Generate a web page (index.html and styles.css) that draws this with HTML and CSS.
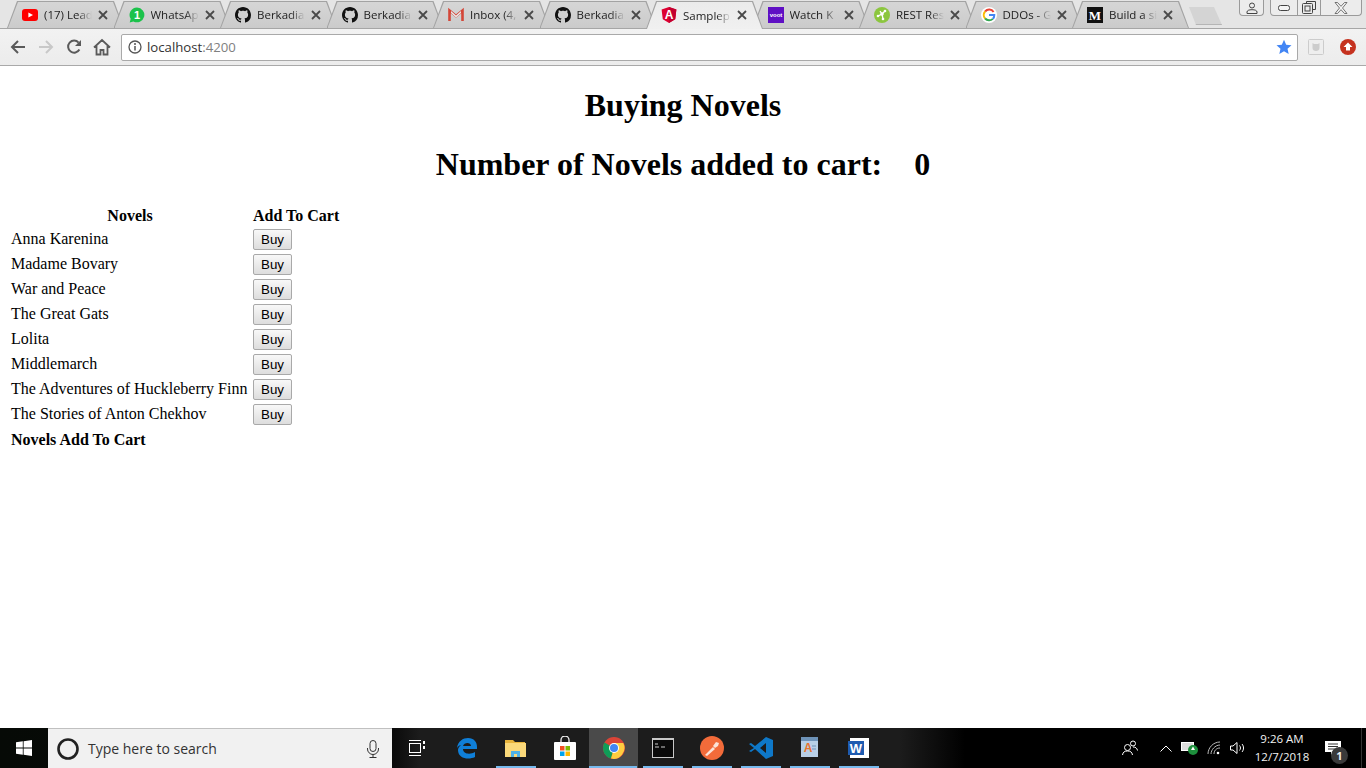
FILE: index.html
```html
<!DOCTYPE html>
<html lang="en">
<head>
    <meta charset="UTF-8">
    <title>Samplep</title>
    <link rel="stylesheet" href="styles.css">
</head>
<body>
    <svg class="sprite" width="0" height="0">
        <symbol id="github" viewBox="0 0 16 16"><path fill="#111" d="M8 0C3.58 0 0 3.58 0 8c0 3.54 2.29 6.53 5.47 7.59.4.07.55-.17.55-.38 0-.19-.01-.82-.01-1.49-2.01.37-2.53-.49-2.69-.94-.09-.23-.48-.94-.82-1.13-.28-.15-.68-.52-.01-.53.63-.01 1.08.58 1.23.82.72 1.21 1.87.87 2.33.66.07-.52.28-.87.51-1.07-1.78-.2-3.64-.89-3.64-3.95 0-.87.31-1.59.82-2.15-.08-.2-.36-1.02.08-2.12 0 0 .67-.21 2.2.82.64-.18 1.32-.27 2-.27.68 0 1.36.09 2 .27 1.53-1.04 2.2-.82 2.2-.82.44 1.1.16 1.92.08 2.12.51.56.82 1.27.82 2.15 0 3.07-1.87 3.75-3.65 3.95.29.25.54.73.54 1.48 0 1.07-.01 1.93-.01 2.2 0 .21.15.46.55.38A8.013 8.013 0 0016 8c0-4.42-3.58-8-8-8z"/></symbol>
        <symbol id="close" viewBox="0 0 10 10"><path d="M1 1l8 8M9 1l-8 8" stroke="#4a4a4a" stroke-width="1.8" fill="none"/></symbol>
    </svg>

    <div class="tabstrip">
        <div class="tab">
            <svg class="favicon" viewBox="0 0 16 16"><rect y="2" width="16" height="12" rx="3" fill="#f00"/><path d="M6.4 5.4v5.2L11 8z" fill="#fff"/></svg>
            <span class="tab-title">(17) Lead</span>
            <svg class="tab-close"><use href="#close"/></svg>
        </div>
        <div class="tab">
            <svg class="favicon" viewBox="0 0 16 16"><path d="M8 .5a7.4 7.4 0 0 0-6.3 11.3L.7 15.4l3.7-1A7.4 7.4 0 1 0 8 .5z" fill="#1bc24b"/><text x="8" y="12" class="fav-num">1</text></svg>
            <span class="tab-title">WhatsAp</span>
            <svg class="tab-close"><use href="#close"/></svg>
        </div>
        <div class="tab">
            <svg class="favicon"><use href="#github"/></svg>
            <span class="tab-title">Berkadia</span>
            <svg class="tab-close"><use href="#close"/></svg>
        </div>
        <div class="tab">
            <svg class="favicon"><use href="#github"/></svg>
            <span class="tab-title">Berkadia</span>
            <svg class="tab-close"><use href="#close"/></svg>
        </div>
        <div class="tab">
            <svg class="favicon" viewBox="0 0 16 16"><path d="M1.5 14V3.5L8 9l6.500-5.500V14" fill="none" stroke="#d44638" stroke-width="2.600"/><path d="M3 4l5 4.500L13 4v2L8 10.500 3 6z" fill="#e8e8e8"/></svg>
            <span class="tab-title">Inbox (4,</span>
            <svg class="tab-close"><use href="#close"/></svg>
        </div>
        <div class="tab">
            <svg class="favicon"><use href="#github"/></svg>
            <span class="tab-title">Berkadia</span>
            <svg class="tab-close"><use href="#close"/></svg>
        </div>
        <div class="tab tab-active">
            <svg class="favicon" viewBox="0 0 16 16"><path d="M8 0L.6 2.600l1.200 9.700L8 16l6.200-3.700 1.200-9.700z" fill="#dd0031"/><path d="M8 0v16l6.200-3.700 1.200-9.700z" fill="#c3002f"/><text x="8" y="12.300" class="fav-a">A</text></svg>
            <span class="tab-title">Samplep</span>
            <svg class="tab-close"><use href="#close"/></svg>
        </div>
        <div class="tab">
            <svg class="favicon" viewBox="0 0 16 16"><rect width="16" height="16" fill="#5f0fc4"/><text x="8" y="10" class="fav-voot">voot</text></svg>
            <span class="tab-title">Watch K</span>
            <svg class="tab-close"><use href="#close"/></svg>
        </div>
        <div class="tab">
            <svg class="favicon" viewBox="0 0 16 16"><circle cx="8" cy="8" r="8" fill="#8cc63f"/><path d="M4 9l4-2 3-3M8 7l1 5M8 7l-2-3" stroke="#fff" stroke-width="1.300" fill="none"/><circle cx="8" cy="7" r="1.800" fill="#fff"/><circle cx="4" cy="9" r="1.300" fill="#fff"/><circle cx="11" cy="4" r="1.300" fill="#fff"/><circle cx="9" cy="12" r="1.300" fill="#fff"/></svg>
            <span class="tab-title">REST Res</span>
            <svg class="tab-close"><use href="#close"/></svg>
        </div>
        <div class="tab">
            <svg class="favicon" viewBox="0 0 16 16"><circle cx="8" cy="8" r="8" fill="#fff"/><path d="M12.600 5A5.300 5.300 0 0 0 4.100 4.500" fill="none" stroke="#ea4335" stroke-width="2"/><path d="M4.100 4.500a5.300 5.300 0 0 0 0 7" fill="none" stroke="#fbbc05" stroke-width="2"/><path d="M4.100 11.500a5.300 5.300 0 0 0 7.700.400" fill="none" stroke="#34a853" stroke-width="2"/><path d="M11.800 11.900A5.300 5.300 0 0 0 13.300 8H8" fill="none" stroke="#4285f4" stroke-width="2"/></svg>
            <span class="tab-title">DDOs - G</span>
            <svg class="tab-close"><use href="#close"/></svg>
        </div>
        <div class="tab">
            <svg class="favicon" viewBox="0 0 16 16"><rect width="16" height="16" fill="#111"/><text x="8" y="12.500" class="fav-m">M</text></svg>
            <span class="tab-title">Build a si</span>
            <svg class="tab-close"><use href="#close"/></svg>
        </div>
        <div class="new-tab"></div>
        <div class="profile-btn">
            <svg width="12" height="12" viewBox="0 0 12 12"><circle cx="6" cy="3.500" r="2.500" fill="none" stroke="#444"/><path d="M1 11.500V10c0-1.500 2-2.300 5-2.300s5 .8 5 2.300v1.500z" fill="none" stroke="#444"/></svg>
        </div>
        <div class="window-btns">
            <div class="win-btn win-min"><svg width="12" height="6" viewBox="0 0 12 6"><rect x=".5" y=".5" width="11" height="5" rx="2" fill="#f4f4f4" stroke="#444"/></svg></div>
            <div class="win-btn win-restore"><svg width="14" height="13" viewBox="0 0 14 13"><path d="M4.500 2.500V.5h9v8h-3" fill="none" stroke="#444"/><rect x=".5" y="2.500" width="10" height="10" rx="1" fill="none" stroke="#444"/><rect x="3" y="5" width="5" height="5" fill="none" stroke="#444"/></svg></div>
            <div class="win-btn win-close"><svg width="14" height="12" viewBox="0 0 14 12"><path d="M1 .5h2.500L7 4.300 10.500.5H13L8.500 6 13 11.500h-2.500L7 7.700l-3.500 3.800H1L5.500 6z" fill="#f4f4f4" stroke="#555" stroke-width=".8"/></svg></div>
        </div>
    </div>

    <div class="toolbar">
        <div class="tool-btn"><svg width="16" height="16" viewBox="0 0 16 16"><path d="M15 8H2.500M8 2L2 8l6 6" fill="none" stroke="#5a5a5a" stroke-width="2"/></svg></div>
        <div class="tool-btn"><svg width="16" height="16" viewBox="0 0 16 16"><path d="M1 8h12.500M8 2l6 6-6 6" fill="none" stroke="#c8c8c8" stroke-width="2"/></svg></div>
        <div class="tool-btn"><svg width="16" height="16" viewBox="0 0 16 16"><path d="M13.400 10.500A6 6 0 1 1 12.600 3.600" fill="none" stroke="#5a5a5a" stroke-width="2"/><path d="M15 1v6H9z" fill="#5a5a5a"/></svg></div>
        <div class="tool-btn"><svg width="18" height="18" viewBox="0 0 18 18"><path d="M1 9.500L9 2l8 7.500M3.500 8v8.500h4V12h3v4.500h4V8" fill="none" stroke="#5a5a5a" stroke-width="1.800"/></svg></div>
        <div class="omnibox">
            <svg class="omni-info" width="14" height="14" viewBox="0 0 14 14"><circle cx="7" cy="7" r="6" fill="none" stroke="#555" stroke-width="1.300"/><path d="M7 6v4.500" stroke="#555" stroke-width="1.500"/><circle cx="7" cy="4" r="1" fill="#555"/></svg>
            <span class="omni-host">localhost</span><span class="omni-port">:4200</span>
            <svg class="omni-star" width="16" height="16" viewBox="0 0 16 16"><path d="M8 .8l2.200 4.900 5.300.5-4 3.600 1.200 5.300L8 12.300 3.300 15.100l1.200-5.300-4-3.600 5.300-.5z" fill="#4285f4"/></svg>
        </div>
        <div class="tool-btn ext-btn"><svg width="16" height="16" viewBox="0 0 16 16"><rect x=".5" y=".5" width="15" height="15" rx="1" fill="#eee" stroke="#ccc"/><path d="M4.500 4l1.500 1h4l1.500-1v5c0 2-1.500 3-3.500 3s-3.500-1-3.500-3z" fill="#ccc"/></svg></div>
        <div class="tool-btn"><svg width="16" height="16" viewBox="0 0 16 16"><circle cx="8" cy="8" r="8" fill="#c5321f"/><path d="M8 3.500L12.500 8H10v3.500H6V8H3.500z" fill="#fff"/></svg></div>
    </div>

    <div class="page">
        <h1>Buying Novels</h1>
        <h1>Number of Novels added to cart: &nbsp;&nbsp; 0</h1>
        <table>
            <tr>
                <th class="novel-col">Novels</th>
                <th>Add To Cart</th>
            </tr>
            <tr><td>Anna Karenina</td><td><button class="buy-btn">Buy</button></td></tr>
            <tr><td>Madame Bovary</td><td><button class="buy-btn">Buy</button></td></tr>
            <tr><td>War and Peace</td><td><button class="buy-btn">Buy</button></td></tr>
            <tr><td>The Great Gats</td><td><button class="buy-btn">Buy</button></td></tr>
            <tr><td>Lolita</td><td><button class="buy-btn">Buy</button></td></tr>
            <tr><td>Middlemarch</td><td><button class="buy-btn">Buy</button></td></tr>
            <tr><td>The Adventures of Huckleberry Finn</td><td><button class="buy-btn">Buy</button></td></tr>
            <tr><td>The Stories of Anton Chekhov</td><td><button class="buy-btn">Buy</button></td></tr>
            <tr><td class="table-foot"><b>Novels Add To Cart</b></td><td></td></tr>
        </table>
    </div>

    <div class="taskbar">
        <div class="start-btn"><svg width="16" height="16" viewBox="0 0 16 16"><path d="M0 2.300l6.800-1v6.200H0zM7.600 1.200L16 0v7.500H7.600zM0 8.400h6.800v6.300L0 13.700zM7.600 8.400H16V16l-8.400-1.200z" fill="#fff"/></svg></div>
        <div class="search-box">
            <svg width="24" height="24" viewBox="0 0 24 24"><circle cx="12" cy="12" r="9.500" fill="none" stroke="#222" stroke-width="2.600"/></svg>
            <span class="search-text">Type here to search</span>
            <svg class="search-mic" width="14" height="18" viewBox="0 0 14 18"><rect x="4" y=".5" width="6" height="11" rx="3" fill="none" stroke="#333"/><path d="M1.500 8v1a5.500 5.500 0 0 0 11 0V8M7 14.500V17M3.500 17.500h7" fill="none" stroke="#333"/></svg>
        </div>
        <div class="task-view"><svg width="16" height="16" viewBox="0 0 16 16"><path d="M0 .5h12M0 15.500h12" stroke="#fff"/><rect x=".5" y="3.500" width="11" height="9" fill="none" stroke="#fff"/><path d="M14 1h2v3h-2zM14 6h2v3h-2z" fill="#fff"/></svg></div>

        <div class="task-item"><svg width="22" height="22" viewBox="0 0 22 22"><path d="M1 11C2 4 7 1 12 1c6 0 9 4 9 9v2H7c0 5 7 6 12 3v5c-6 3-17 2-17-7 0-2 1-3 3-5-1 0-3 1-4 3zm6-2h8c0-4-7-4-8 0z" fill="#0f7fd8"/></svg></div>
        <div class="task-item task-open"><svg width="22" height="20" viewBox="0 0 22 20"><path d="M0 2h8l2 2h10v3H0z" fill="#e8b43c"/><rect y="5" width="21" height="14" fill="#fbd97a"/><path d="M6 19v-6h9v6h-3v-3H9v3z" fill="#4fb3e8"/></svg></div>
        <div class="task-item"><svg width="22" height="24" viewBox="0 0 22 24"><path d="M7 7V4a4 4 0 0 1 8 0v3" fill="none" stroke="#eee" stroke-width="1.300"/><rect y="6" width="22" height="18" rx="1" fill="#fff"/><path d="M6 10h4.500v4.500H6z" fill="#f25022"/><path d="M11.500 10H16v4.500h-4.500z" fill="#7fba00"/><path d="M6 15.500h4.500V20H6z" fill="#00a4ef"/><path d="M11.500 15.500H16V20h-4.500z" fill="#ffb900"/></svg></div>
        <div class="task-item task-open task-active"><svg width="22" height="22" viewBox="0 0 22 22"><circle cx="11" cy="11" r="11" fill="#db4437"/><path d="M11 11L1.500 5.500A11 11 0 0 0 8 21.600z" fill="#0f9d58"/><path d="M11 6h9.300A11 11 0 0 1 8 21.600L11 11z" fill="#ffcd40"/><circle cx="11" cy="11" r="5" fill="#fff"/><circle cx="11" cy="11" r="4" fill="#4285f4"/></svg></div>
        <div class="task-item task-open"><svg width="22" height="20" viewBox="0 0 22 20"><rect width="22" height="20" fill="#c9c9c9"/><rect x="1" y="2" width="20" height="17" fill="#0a0a0a"/><path d="M3 6h3M3 9h4M9 9h4" stroke="#ccc"/></svg></div>
        <div class="task-item task-open"><svg width="24" height="24" viewBox="0 0 24 24"><circle cx="12" cy="12" r="12" fill="#f26b3a"/><path d="M5 19l8-8 2 2-8 7zM13 10l3-4 3 1-1 3-3 2z" fill="#fbe3d8"/></svg></div>
        <div class="task-item task-open"><svg width="24" height="24" viewBox="0 0 24 24"><path d="M17 1l7 3v16l-7 3L6 13l-4 3-2-1 5-3-5-4 2-1 4 3zm0 6l-6 5 6 5z" fill="#0e78c8"/></svg></div>
        <div class="task-item task-open"><svg width="20" height="22" viewBox="0 0 20 22"><rect x="1" width="17" height="20" fill="#b8cfe6"/><rect x="1" width="17" height="4" fill="#6e93b8"/><text x="8" y="15" class="task-a">A</text><path d="M12 9h4M12 12h4" stroke="#6e93b8"/></svg></div>
        <div class="task-item task-open"><svg width="22" height="22" viewBox="0 0 22 22"><rect x="2" y="1" width="19" height="20" fill="#fff"/><rect y="4" width="16" height="14" fill="#1e5bb0"/><text x="8" y="16" class="task-w">W</text></svg></div>

        <div class="tray">
            <div class="tray-item"><svg width="16" height="16" viewBox="0 0 16 16"><circle cx="5.500" cy="7.500" r="3" fill="none" stroke="#fff"/><path d="M.5 15c.5-3 2-4 5-4s4.500 1 5 4" fill="none" stroke="#fff"/><circle cx="11" cy="3.500" r="2.500" fill="none" stroke="#fff"/><path d="M11 7c2.500 0 4 1 4.500 3.500" fill="none" stroke="#fff"/></svg></div>
            <div class="tray-item tray-chevron"><svg width="12" height="7" viewBox="0 0 12 7"><path d="M.5 6.500L6 1l5.500 5.500" fill="none" stroke="#fff"/></svg></div>
            <div class="tray-item"><svg width="18" height="14" viewBox="0 0 18 14"><rect x=".5" y="1.500" width="12" height="8" fill="#ddd" stroke="#fff"/><circle cx="12" cy="9" r="5" fill="#1d8f3c"/><path d="M12 5.500L10 9h4z" fill="#fff"/></svg></div>
            <div class="tray-item"><svg width="14" height="14" viewBox="0 0 14 14"><path d="M1 13C1 7 6 1 13 1M4 13c0-4 4-9 9-9M7 13c0-3 2-6 6-6" fill="none" stroke="#bbb"/><circle cx="11" cy="12" r="1.300" fill="#fff"/></svg></div>
            <div class="tray-item"><svg width="16" height="14" viewBox="0 0 16 14"><path d="M.5 5h2.500L7 1.500v11L3 9H.5z" fill="none" stroke="#fff"/><path d="M9.500 4.500c1.300 1.500 1.300 3.500 0 5M12 3c2 2.300 2 5.700 0 8" fill="none" stroke="#fff"/></svg></div>
            <div class="tray-clock">
                <div>9:26 AM</div>
                <div>12/7/2018</div>
            </div>
            <div class="tray-notify">
                <svg width="16" height="14" viewBox="0 0 16 14"><path d="M0 0h16v11H9l-3 3v-3H0z" fill="#fff"/><path d="M3 3h10M3 5.500h10M3 8h7" stroke="#333"/></svg>
                <span class="notify-badge">1</span>
            </div>
        </div>
    </div>
</body>
</html>
```

FILE: styles.css
```css
html, body {
    margin: 0;
    height: 100%;
    overflow: hidden;
}
body {
    display: flex;
    flex-direction: column;
    height: 768px;
    background: white;
}
.sprite {
    position: absolute;
}

/* tabs */
.tabstrip {
    display: flex;
    align-items: flex-start;
    height: 29px;
    box-sizing: border-box;
    padding: 1px 5px 0 7px;
    background: #e5e5e5;
    border-bottom: 1px solid #a6a6a6;
    font-family: "Open Sans", sans-serif;
}
.tab {
    position: relative;
    display: flex;
    align-items: center;
    flex: none;
    width: 117px;
    height: 27px;
    margin-right: -10.5px;
    padding-left: 15px;
    box-sizing: border-box;
    background: #a3a3a3;
    clip-path: polygon(0 100%, 10px 0, 107px 0, 117px 100%);
}
.tab::before {
    content: "";
    position: absolute;
    z-index: -1;
    inset: 1px 1px 0 1px;
    background: linear-gradient(#d6d6d6, #cbcbcb);
    clip-path: polygon(0 100%, 10px 0, 105px 0, 115px 100%);
}
.tab-active {
    z-index: 2;
    height: 28px;
}
.tab-active::before {
    background: linear-gradient(#ebebeb, #f0f0f0);
}
.favicon {
    flex: none;
    width: 16px;
    height: 16px;
}
.tab-title {
    flex: none;
    width: 48px;
    margin-left: 6px;
    overflow: hidden;
    white-space: nowrap;
    font-size: 11.5px;
    color: #222;
    -webkit-mask-image: linear-gradient(to right, #000 70%, transparent 100%);
    mask-image: linear-gradient(to right, #000 70%, transparent 100%);
}
.tab-close {
    flex: none;
    width: 10px;
    height: 10px;
    margin-left: 6px;
}
.fav-num {
    font: bold 11px "Liberation Sans", sans-serif;
    fill: #fff;
    text-anchor: middle;
}
.fav-a {
    font: bold 12px "Liberation Sans", sans-serif;
    fill: #fff;
    text-anchor: middle;
}
.fav-voot {
    font: bold 6px "Liberation Sans", sans-serif;
    fill: #fff;
    text-anchor: middle;
}
.fav-m {
    font: bold 13px "Liberation Serif", serif;
    fill: #fff;
    text-anchor: middle;
}
.new-tab {
    flex: none;
    width: 33px;
    height: 17px;
    margin: 6px 0 0 10.5px;
    background: #d4d4d4;
    border-bottom: 1px solid #b5b5b5;
    clip-path: polygon(0 0, 25px 0, 33px 100%, 7px 100%);
}
.profile-btn {
    display: flex;
    align-items: center;
    justify-content: center;
    flex: none;
    width: 23px;
    height: 15px;
    margin: -1px 0 0 17px;
    background: #ececec;
    border: 1px solid #9a9a9a;
    border-top: none;
    border-radius: 0 0 4px 4px;
}
.window-btns {
    display: flex;
    flex: none;
    height: 15px;
    margin: -1px 0 0 6px;
    background: #ececec;
    border: 1px solid #9a9a9a;
    border-top: none;
    border-radius: 0 0 4px 4px;
}
.win-btn {
    display: flex;
    align-items: center;
    justify-content: center;
    box-sizing: border-box;
    border-left: 1px solid #9a9a9a;
}
.win-min {
    width: 26px;
    border-left: none;
}
.win-restore {
    width: 23px;
}
.win-close {
    width: 41px;
}

/* toolbar */
.toolbar {
    display: flex;
    align-items: center;
    flex: none;
    height: 37px;
    box-sizing: border-box;
    padding: 0 4px;
    background: linear-gradient(#f2f2f2, #ececec);
    border-bottom: 1px solid #a9a9a9;
}
.tool-btn {
    display: flex;
    align-items: center;
    justify-content: center;
    flex: none;
    width: 28px;
}
.omnibox {
    display: flex;
    align-items: center;
    flex: 1;
    height: 27px;
    margin: 0 4px 0 5px;
    padding: 0 5px 0 6px;
    box-sizing: border-box;
    background: white;
    border: 1px solid #a9a9a9;
    border-radius: 2px;
    font: 13.2px "Open Sans", sans-serif;
}
.omni-info {
    margin-right: 5px;
}
.omni-host {
    color: #333;
}
.omni-port {
    color: #808080;
}
.omni-star {
    margin-left: auto;
}
.ext-btn {
    margin-right: 4px;
}

/* page */
.page {
    flex: 1;
    padding: 0 8px;
    font-family: "Liberation Serif", serif;
    color: black;
}
h1 {
    margin: 21.44px 0;
    font-size: 32px;
    text-align: center;
}
.novel-col {
    width: 238px;
}
td {
    vertical-align: top;
}
td:first-child {
    padding-top: 2px;
}
td.table-foot {
    padding-top: 3px;
}
.buy-btn {
    display: block;
    width: 39px;
    height: 21px;
    padding: 0;
    background: linear-gradient(#f8f8f8, #dddddd);
    border: 1px solid #a9a9a9;
    border-radius: 2px;
    font: 13.33px "Liberation Sans", sans-serif;
    color: black;
}

/* windows taskbar */
.taskbar {
    display: flex;
    flex: none;
    height: 40px;
    background: linear-gradient(to right, #060a06 0, #0a0a0a 392px, #1c1c1c 420px, #1c1c1c 900px, #000 965px);
    font-family: "Open Sans", sans-serif;
}
.start-btn {
    display: flex;
    align-items: center;
    justify-content: center;
    flex: none;
    width: 48px;
}
.search-box {
    display: flex;
    align-items: center;
    flex: none;
    width: 344px;
    padding: 0 12px 0 8px;
    box-sizing: border-box;
    background: #f1f1f1;
    border-top: 1px solid #c0c0c0;
}
.search-text {
    margin-left: 8px;
    font-size: 14px;
    color: #333;
}
.search-mic {
    margin-left: auto;
}
.task-view {
    display: flex;
    align-items: center;
    justify-content: center;
    flex: none;
    width: 50px;
}
.task-item {
    position: relative;
    display: flex;
    align-items: center;
    justify-content: center;
    flex: none;
    width: 49px;
}
.task-open::after {
    content: "";
    position: absolute;
    left: 5px;
    right: 4px;
    bottom: 0;
    height: 2px;
    background: #76b9ed;
}
.task-active {
    background: #4a4a4a;
}
.task-active::after {
    left: 0;
    right: 1px;
}
.task-a {
    font: bold 12px "Liberation Sans", sans-serif;
    fill: #e8742c;
    text-anchor: middle;
}
.task-w {
    font: bold 13px "Liberation Sans", sans-serif;
    fill: #fff;
    text-anchor: middle;
}
.tray {
    display: flex;
    flex: none;
    align-items: center;
    margin-left: auto;
    padding-right: 5px;
    border-right: 1px solid #333;
    box-sizing: content-box;
    height: 40px;
    margin-right: 4px;
}
.tray-item {
    display: flex;
    align-items: center;
    justify-content: center;
    width: 24px;
}
.tray-chevron {
    margin-left: 12px;
}
.tray-clock {
    width: 64px;
    font-size: 11.5px;
    line-height: 18px;
    text-align: center;
    color: #f2f2f2;
}
.tray-notify {
    position: relative;
    display: flex;
    align-items: center;
    justify-content: center;
    width: 38px;
    height: 40px;
    margin-right: 4px;
}
.notify-badge {
    position: absolute;
    top: 19px;
    right: 4px;
    width: 17px;
    height: 17px;
    border-radius: 50%;
    background: #3a3a3a;
    font-size: 11px;
    font-weight: bold;
    line-height: 17px;
    text-align: center;
    color: #eee;
}
```
